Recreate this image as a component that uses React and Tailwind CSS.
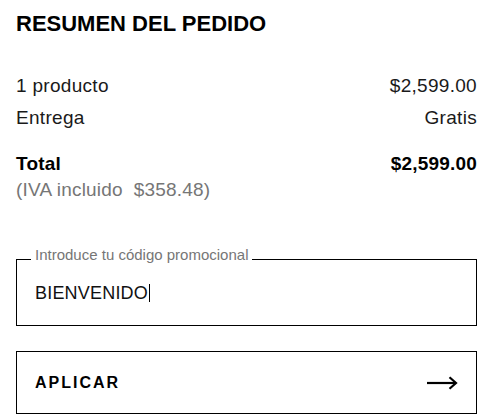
import React from "react";

function Row({ label, value, bold }) {
  return (
    <div className={`flex justify-between ${bold ? "font-bold" : ""}`}>
      <span>{label}</span>
      <span>{value}</span>
    </div>
  );
}

function ArrowRight() {
  return (
    <svg width="32" height="14" viewBox="0 0 32 14" fill="none" stroke="#000" strokeWidth="2.2">
      <path d="M1 7h29" />
      <path d="M23.5 1.2 30 7l-6.5 5.8" strokeLinejoin="miter" />
    </svg>
  );
}

export default function App() {
  return (
    <div
      className="w-[493px] h-[419px] bg-white px-4 pt-[10px] text-black overflow-hidden"
      style={{ fontFamily: '"Liberation Sans", Arial, sans-serif' }}
    >
      <h2 className="text-[22px] leading-[28px] font-bold">RESUMEN DEL PEDIDO</h2>

      {/* desglose */}
      <div className="mt-8 text-[19px] leading-[32px] tracking-[0.3px] text-[#1a1a1a]">
        <Row label="1 producto" value="$2,599.00" />
        <Row label="Entrega" value="Gratis" />
      </div>

      <div className="mt-[17px] text-[19px] leading-[26px] tracking-[0.2px]">
        <Row label="Total" value="$2,599.00" bold />
        <div className="text-[#767676]">(IVA incluido&nbsp;&nbsp;$358.48)</div>
      </div>

      {/* codigo promocional */}
      <div className="relative mt-[56px] h-[67px] border border-black flex items-center pl-[18px]">
        <span className="absolute left-[14px] -top-[13px] bg-white px-1 text-[15px] leading-[15px] text-[#767676]">
          Introduce tu código promocional
        </span>
        <span className="text-[18px] leading-[24px] tracking-[0.2px] text-[#111]">BIENVENIDO</span>
        <span className="ml-[1px] w-px h-[18px] bg-black" />
      </div>

      <button className="mt-[25px] w-full h-[63px] border border-black flex items-center justify-between pl-[18px] pr-[18px]">
        <span className="text-[16px] leading-[20px] font-bold tracking-[2px]">APLICAR</span>
        <ArrowRight />
      </button>
    </div>
  );
}
